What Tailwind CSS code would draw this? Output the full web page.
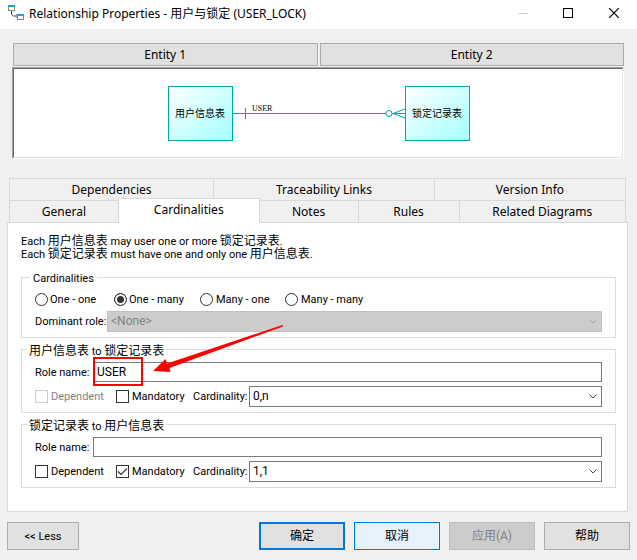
<!DOCTYPE html>
<html lang="en">
<head>
<meta charset="utf-8">
<meta name="viewport" content="width=device-width, initial-scale=1">
<title>Relationship Properties</title>
<script src="https://cdn.jsdelivr.net/npm/@tailwindcss/browser@4"></script>
</head>
<body class="min-h-screen bg-[#f0f0f0] text-black text-[11px] leading-[13px] font-[Roboto,'Noto_Sans_CJK_SC',sans-serif]">

<!-- Title bar -->
<header class="flex h-[29px] items-center bg-white pl-2 font-['Noto_Sans','Noto_Sans_CJK_SC',sans-serif]">
  <svg class="mr-[5px] mb-1 size-4 shrink-0" viewBox="0 0 16 16" fill="none" aria-hidden="true">
    <rect x="0.5" y="0.5" width="6" height="5" fill="#fff" stroke="#8a8468"/>
    <rect x="0" y="0" width="7" height="2" fill="#2aa0bd"/>
    <path d="M3.500 6v3.500l2 1.500h4" stroke="#3b3b9a"/>
    <path d="M9 9L7 11l2 2" stroke="#8d8dd0"/>
    <rect x="9.500" y="9.500" width="6" height="5" fill="#fff" stroke="#8a8468"/>
    <rect x="9" y="9" width="7" height="2" fill="#2aa0bd"/>
  </svg>
  <h1 class="grow whitespace-nowrap pb-0.5 text-[12px] leading-4">Relationship Properties - 用户与锁定 (USER_LOCK)</h1>
  <div class="flex h-full shrink-0 items-center">
    <button type="button" disabled aria-label="Minimize" class="flex h-full w-[45px] items-center justify-center pb-[3px]"><svg width="10" height="10" viewBox="0 0 10 10"><path d="M0 5.500h10" stroke="#ccc"/></svg></button>
    <button type="button" aria-label="Maximize" class="flex h-full w-[46px] items-center justify-center pb-[3px]"><svg width="10" height="10" viewBox="0 0 10 10" fill="none"><rect x="0.500" y="0.500" width="9" height="9" stroke="#000"/></svg></button>
    <button type="button" aria-label="Close" class="flex h-full w-[46px] items-center justify-center pb-[3px]"><svg width="10" height="10" viewBox="0 0 10 10"><path d="M0 0l10 10M10 0L0 10" stroke="#000" stroke-width="1.200"/></svg></button>
  </div>
</header>

<main>
  <!-- Entities and diagram -->
  <section class="mr-[13px] ml-3 pt-[14px]">
    <div class="ml-px flex gap-0.5 pb-px font-['Noto_Sans',sans-serif] text-[12px] leading-4">
      <button type="button" class="h-[23px] flex-1 border border-[#adadad] bg-[#e1e1e1]">Entity 1</button>
      <button type="button" class="h-[23px] flex-1 border border-[#adadad] bg-[#e1e1e1]">Entity 2</button>
    </div>
    <div class="border border-t-[#a0a0a0] border-r-white border-b-white border-l-[#a0a0a0]">
      <div class="flex justify-center border border-t-[#696969] border-r-[#e3e3e3] border-b-[#e3e3e3] border-l-[#696969] bg-white">
        <svg width="304" height="88" viewBox="0 0 304 88" fill="none" stroke="#00a8a8" role="img" aria-label="Relationship diagram">
          <defs>
            <linearGradient id="node" x1="0" y1="0" x2="1" y2="1"><stop offset="0" stop-color="#fff"/><stop offset="0.850" stop-color="#b0ffff"/></linearGradient>
          </defs>
          <path d="M67 44.500h153M79.500 39v11"/>
          <circle cx="223" cy="44.500" r="3"/>
          <path d="M226 44.500h13M227 44.500l12-4.500M227 44.500l12 4.500"/>
          <rect x="2.500" y="17.500" width="64" height="54" fill="url(#node)"/>
          <rect x="239.500" y="17.500" width="64" height="54" fill="url(#node)"/>
          <g fill="#000" stroke="none" text-anchor="middle" class="font-['Noto_Sans_CJK_SC',sans-serif] text-[10px]">
            <text x="34" y="48">用户信息表</text>
            <text x="271" y="48">锁定记录表</text>
          </g>
          <text x="86" y="42" fill="#000" stroke="none" class="font-['Liberation_Serif',serif] text-[8px]">USER</text>
        </svg>
      </div>
    </div>
  </section>

  <!-- Tabs -->
  <div role="tablist" class="mr-[11px] ml-[9px] mt-[19px] border-l border-[#d9d9d9] font-['Noto_Sans',sans-serif] text-[12px] leading-4">
    <div class="flex h-[22px] border-t border-[#d9d9d9]">
      <button type="button" role="tab" class="flex-[204] border-r border-[#d9d9d9]">Dependencies</button>
      <button type="button" role="tab" class="flex-[221] border-r border-[#d9d9d9]">Traceability Links</button>
      <button type="button" role="tab" class="flex-[191] border-r border-[#d9d9d9]">Version Info</button>
    </div>
    <div class="flex h-[22px] items-end">
      <button type="button" role="tab" class="h-[22px] flex-[109] border-t border-[#d9d9d9]">General</button>
      <button type="button" role="tab" aria-selected="true" class="relative -mb-px h-[25px] flex-[141] border border-b-0 border-[#d9d9d9] bg-white pb-0.5">Cardinalities</button>
      <button type="button" role="tab" class="h-[22px] flex-[99] border-t border-r border-[#d9d9d9]">Notes</button>
      <button type="button" role="tab" class="h-[22px] flex-[101] border-t border-r border-[#d9d9d9]">Rules</button>
      <button type="button" role="tab" class="h-[22px] flex-[167] border-t border-r border-[#d9d9d9]">Related Diagrams</button>
    </div>
  </div>

  <section role="tabpanel" class="mr-[9px] ml-[7px] border border-[#d9d9d9] bg-white pt-3 pr-[11px] pb-[23px] pl-[13px]">
    <p>Each <span class="text-[12px]">用户信息表</span> may user one or more <span class="text-[12px]">锁定记录表</span>.</p>
    <p>Each <span class="text-[12px]">锁定记录表</span> must have one and only one <span class="text-[12px]">用户信息表</span>.</p>

    <fieldset class="mt-[10px] min-w-0 border border-[#dcdcdc] pt-[9px] pr-[13px] pb-[5px] pl-[13px]">
      <legend class="-ml-[5px] h-[13px] px-[3px] leading-[15px]">Cardinalities</legend>
      <div class="flex">
        <label class="flex w-[79px] items-center gap-0.5 whitespace-nowrap"><input type="radio" name="card" class="size-[13px] shrink-0 appearance-none rounded-full border border-[#333] bg-white checked:border-[#333] checked:bg-[#333] checked:shadow-[inset_0_0_0_2px_#fff]">One - one</label>
        <label class="flex w-[86px] items-center gap-0.5 whitespace-nowrap"><input type="radio" name="card" checked class="size-[13px] shrink-0 appearance-none rounded-full border border-[#333] bg-white checked:border-[#333] checked:bg-[#333] checked:shadow-[inset_0_0_0_2px_#fff]">One - many</label>
        <label class="flex w-[85px] items-center gap-[3px] whitespace-nowrap"><input type="radio" name="card" class="size-[13px] shrink-0 appearance-none rounded-full border border-[#333] bg-white checked:border-[#333] checked:bg-[#333] checked:shadow-[inset_0_0_0_2px_#fff]">Many - one</label>
        <label class="flex items-center gap-[3px] whitespace-nowrap"><input type="radio" name="card" class="size-[13px] shrink-0 appearance-none rounded-full border border-[#333] bg-white checked:border-[#333] checked:bg-[#333] checked:shadow-[inset_0_0_0_2px_#fff]">Many - many</label>
      </div>
      <div class="mt-[5px] flex items-center">
        <label for="dominant" class="w-[72px] shrink-0 whitespace-nowrap">Dominant role:</label>
        <div class="relative grow">
          <select id="dominant" disabled class="block h-[21px] w-full appearance-none border border-[#bfbfbf] bg-[#ccc] pl-[3px] text-[12px] text-[#838383] opacity-100"><option>&lt;None&gt;</option></select>
          <svg class="pointer-events-none absolute top-2 right-[5px]" width="8" height="5" viewBox="0 0 8 5" fill="none" stroke="#a3a3a3"><path d="M0.500 0.500L4 4l3.500-3.500"/></svg>
        </div>
      </div>
    </fieldset>

    <fieldset class="relative mt-[5px] min-w-0 border border-[#dcdcdc] pt-[6px] pr-[13px] pb-[5px] pl-[13px]">
      <legend class="-ml-2 h-[13px] px-0.5 leading-4"><span class="text-[12px]">用户信息表</span> to <span class="text-[12px]">锁定记录表</span></legend>
      <div class="flex items-center">
        <label for="role1" class="w-[58px] shrink-0 whitespace-nowrap">Role name:</label>
        <input id="role1" type="text" value="USER" class="h-5 min-w-0 grow border border-[#7a7a7a] bg-white px-[3px] text-[12px]">
      </div>
      <div class="mt-1 flex items-center">
        <label class="flex w-[81px] shrink-0 items-center gap-[3px] text-[#838383]"><input type="checkbox" disabled class="size-[13px] shrink-0 appearance-none border border-[#ccc] bg-white">Dependent</label>
        <label class="flex w-[77px] shrink-0 items-center gap-[3px]"><input type="checkbox" class="size-[13px] shrink-0 appearance-none border border-[#333] bg-white">Mandatory</label>
        <label for="card1" class="w-[56px] shrink-0 whitespace-nowrap">Cardinality:</label>
        <div class="relative grow">
          <select id="card1" class="block h-[21px] w-full appearance-none border border-[#7a7a7a] bg-white pl-[3px] text-[12px]"><option>0,n</option></select>
          <svg class="pointer-events-none absolute top-2 right-[5px]" width="8" height="5" viewBox="0 0 8 5" fill="none" stroke="#444"><path d="M0.500 0.500L4 4l3.500-3.500"/></svg>
        </div>
      </div>
      <!-- Callout pointing at the role name -->
      <div class="pointer-events-none absolute top-px left-[71px] h-[29px] w-[50px] border-2 border-[#f00]"></div>
      <svg class="pointer-events-none absolute -top-[31px] left-[131px]" width="132" height="48" viewBox="0 0 132 48" fill="#f00" aria-hidden="true"><path d="M0 46L12.500 34l1.500 4.500L129.500 0l.5 1.500L16.500 43l1 4z"/></svg>
    </fieldset>

    <fieldset class="mt-[5px] min-w-0 border border-[#dcdcdc] pt-[6px] pr-[13px] pb-[5px] pl-[13px]">
      <legend class="-ml-2 h-[13px] px-0.5 leading-4"><span class="text-[12px]">锁定记录表</span> to <span class="text-[12px]">用户信息表</span></legend>
      <div class="flex items-center">
        <label for="role2" class="w-[58px] shrink-0 whitespace-nowrap">Role name:</label>
        <input id="role2" type="text" class="h-5 min-w-0 grow border border-[#7a7a7a] bg-white px-[3px] text-[12px]">
      </div>
      <div class="mt-1 flex items-center">
        <label class="flex w-[81px] shrink-0 items-center gap-[3px]"><input type="checkbox" class="size-[13px] shrink-0 appearance-none border border-[#333] bg-white">Dependent</label>
        <label class="relative flex w-[77px] shrink-0 items-center gap-[3px]"><input type="checkbox" checked class="peer size-[13px] shrink-0 appearance-none border border-[#333] bg-white"><svg class="pointer-events-none absolute left-0 hidden peer-checked:block" width="13" height="13" viewBox="0 0 13 13" fill="none" stroke="#333"><path d="M2 6.500l3 3L11 3.500" stroke-width="1.200"/></svg>Mandatory</label>
        <label for="card2" class="w-[56px] shrink-0 whitespace-nowrap">Cardinality:</label>
        <div class="relative grow">
          <select id="card2" class="block h-[21px] w-full appearance-none border border-[#7a7a7a] bg-white pl-[3px] text-[12px]"><option>1,1</option></select>
          <svg class="pointer-events-none absolute top-2 right-[5px]" width="8" height="5" viewBox="0 0 8 5" fill="none" stroke="#444"><path d="M0.500 0.500L4 4l3.500-3.500"/></svg>
        </div>
      </div>
    </fieldset>
  </section>
</main>

<!-- Dialog buttons -->
<footer class="flex gap-[9px] pt-[10px] pr-[7px] pb-[10px] pl-[7px] text-[12px]">
  <button type="button" class="mr-auto h-7 w-[72px] border border-[#adadad] bg-[#e1e1e1] text-[11px]">&lt;&lt; Less</button>
  <button type="button" class="h-7 w-[86px] border-2 border-[#0078d7] bg-[#e1e1e1]">确定</button>
  <button type="button" class="h-7 w-[86px] border border-[#0078d7] bg-[#e5f1fb]">取消</button>
  <button type="button" disabled class="h-7 w-[86px] border border-[#bfbfbf] bg-[#ccc] text-[#838383]">应用(A)</button>
  <button type="button" class="h-7 w-[86px] border border-[#adadad] bg-[#e1e1e1]">帮助</button>
</footer>
</body>
</html>
